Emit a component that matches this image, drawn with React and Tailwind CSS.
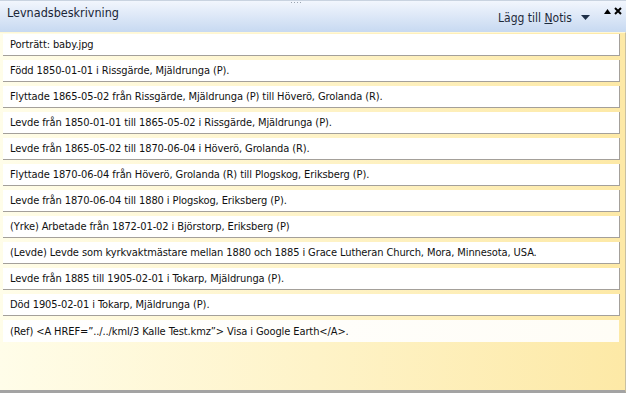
import React from "react";

const rows = [
  "Porträtt: baby.jpg",
  "Född 1850-01-01 i Rissgärde, Mjäldrunga (P).",
  "Flyttade 1865-05-02 från Rissgärde, Mjäldrunga (P) till Höverö, Grolanda (R).",
  "Levde från 1850-01-01 till 1865-05-02 i Rissgärde, Mjäldrunga (P).",
  "Levde från 1865-05-02 till 1870-06-04 i Höverö, Grolanda (R).",
  "Flyttade 1870-06-04 från Höverö, Grolanda (R) till Plogskog, Eriksberg (P).",
  "Levde från 1870-06-04 till 1880 i Plogskog, Eriksberg (P).",
  "(Yrke) Arbetade från 1872-01-02 i Björstorp, Eriksberg (P)",
  "(Levde) Levde som kyrkvaktmästare mellan 1880 och 1885 i Grace Lutheran Church, Mora, Minnesota, USA.",
  "Levde från 1885 till 1905-02-01 i Tokarp, Mjäldrunga (P).",
  "Död 1905-02-01 i Tokarp, Mjäldrunga (P).",
];

export default function App() {
  return (
    <div
      className="w-[626px] h-[393px] flex flex-col overflow-hidden font-stretch-condensed"
      style={{ fontFamily: '"DejaVu Sans", Tahoma, sans-serif' }}
    >
      <div className="h-[32px] flex justify-between bg-gradient-to-b from-[#f2f6fd] to-[#c7d9f1] border-t border-[#c9d3e0] relative">
        <div className="absolute left-[290px] top-0 w-[12px] h-[3px] bg-[radial-gradient(circle,#9aa4b0_1px,transparent_1px)] bg-[length:3px_3px]" />
        <span className="pl-[7px] pt-[6px] text-[12.5px] text-[#1a2536] leading-none">Levnadsbeskrivning</span>
        <div className="flex items-center pr-[4px] text-[#1e2a3a]">
          <span className="text-[12px] leading-none mt-[2px]">
            Lägg till <span className="underline">N</span>otis
          </span>
          <svg width="9" height="6" viewBox="0 0 9 6" className="ml-[9px] mt-[2px]">
            <polygon points="0,0 9,0 4.5,5" fill="#1e3048" />
          </svg>
          <div className="flex items-center self-start mt-[6px] ml-[14px] gap-[3px]">
            <svg width="7" height="5" viewBox="0 0 7 5">
              <polygon points="0,5 7,5 3.5,0" fill="#000" />
            </svg>
            <svg width="8" height="8" viewBox="0 0 8 8">
              <path d="M1 1 L7 7 M7 1 L1 7" stroke="#000" strokeWidth="2" />
            </svg>
          </div>
        </div>
      </div>
      <div className="flex-1 flex flex-col gap-[4px] pt-[1px] pl-[3px] pr-[2px] bg-gradient-to-r from-[#fffde9] to-[#fde9a6] border-t border-[#fff8d6] border-b-[3px] border-b-[#a3a3a3] border-r border-r-[#c9c0a0]">
        {rows.map((t, i) => (
          <div
            key={i}
            className="h-[22px] mr-[3px] flex items-center bg-white border-b border-r border-[#a4a09a] pl-[7px] text-[11px] tracking-[-0.1px] text-[#111] leading-none whitespace-nowrap"
          >
            {t}
          </div>
        ))}
        <div className="h-[22px] mr-[4px] flex items-center bg-gradient-to-r from-white to-[#fffdf6] pl-[7px] text-[11px] tracking-[-0.1px] text-[#111] leading-none whitespace-nowrap">
          (Ref) &lt;A HREF=”../../kml/3 Kalle Test.kmz”&gt; Visa i Google Earth&lt;/A&gt;.
        </div>
      </div>
    </div>
  );
}
